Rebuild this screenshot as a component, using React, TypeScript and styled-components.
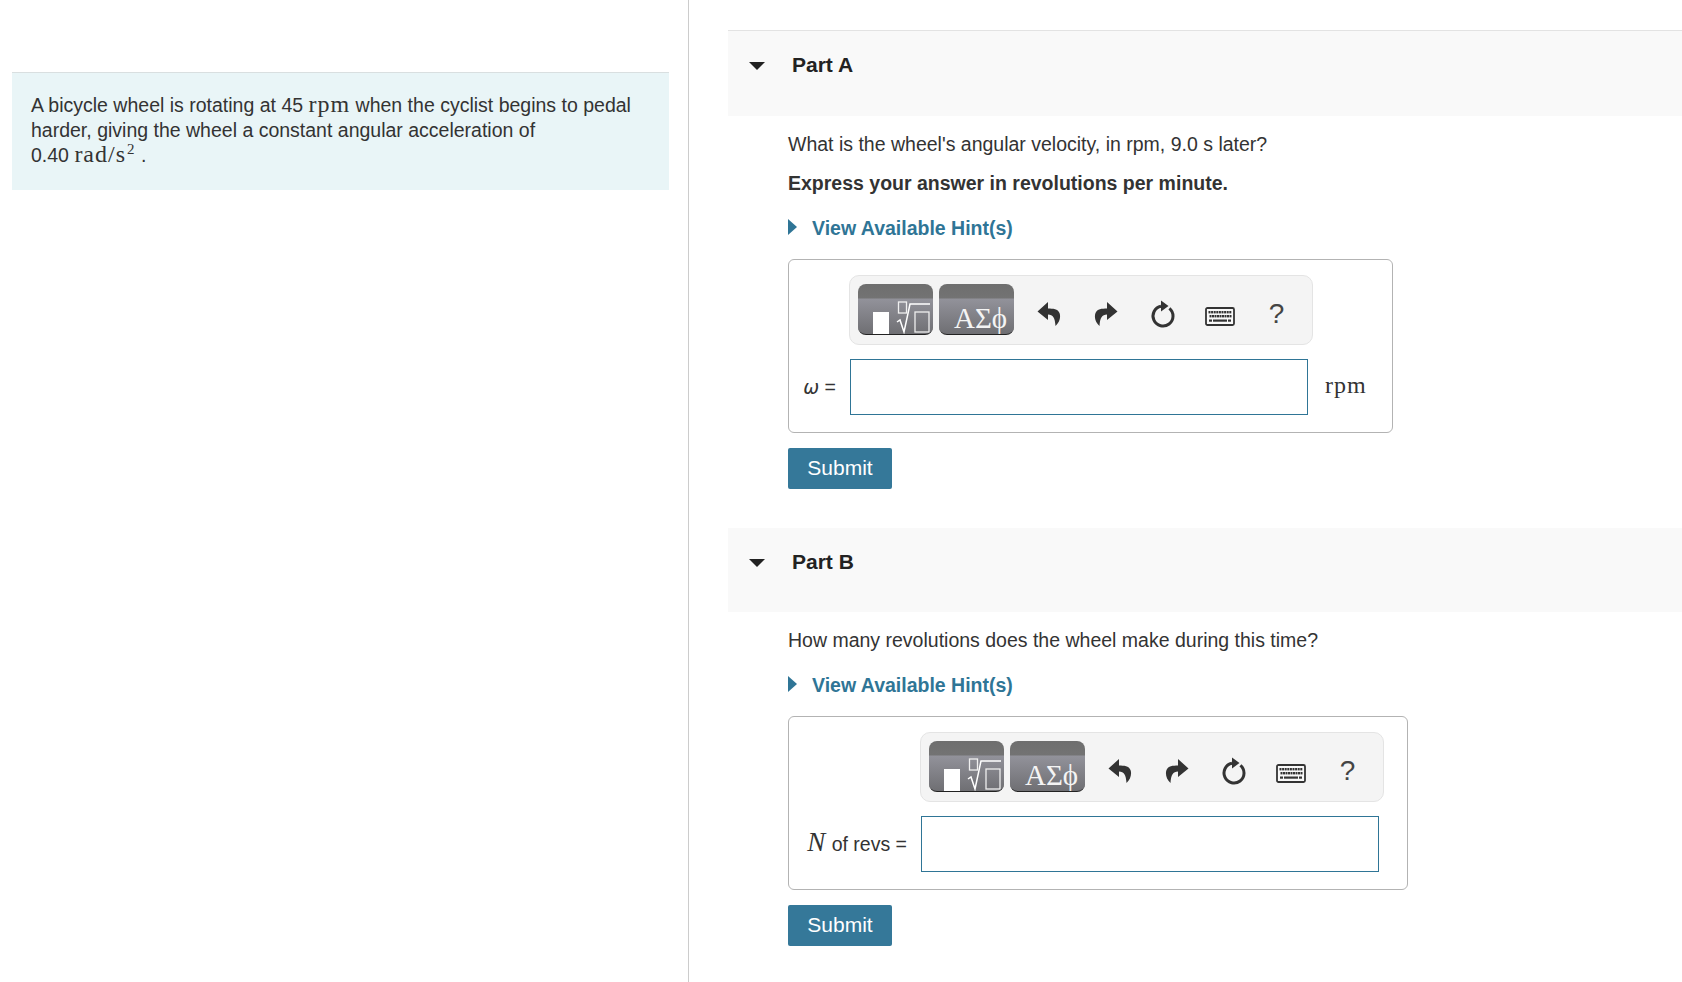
import styled, { createGlobalStyle } from 'styled-components'

const GlobalStyle = createGlobalStyle`
  html, body {
    margin: 0;
    padding: 0;
    background: #fff;
  }
  body {
    font-family: "Liberation Sans", Arial, sans-serif;
    color: #333;
    font-size: 19.5px;
    line-height: 25px;
  }
`

function UndoIcon() {
  return (
    <svg width="24" height="28" viewBox="0 0 24 28">
      <path d="M11 2 L0.500 11.500 L11 20 L11 14.500 C16 14.500 18 18 18.500 26 C22.500 22.500 24 17 22.500 13 C21 9 16 8.500 11 8.500 Z" fill="#333" />
    </svg>
  )
}

function RedoIcon() {
  return (
    <svg width="28" height="28" viewBox="0 0 28 28">
      <path d="M15 2 L25.500 11.500 L15 20 L15 14.500 C10 14.500 8 18 7.500 26 C3.500 22.500 2 17 3.500 13 C5 9 10 8.500 15 8.500 Z" fill="#333" />
    </svg>
  )
}

function ResetIcon() {
  return (
    <svg width="28" height="32" viewBox="0 0 28 32">
      <path d="M20.400 10.300 A10 10 0 1 1 12 8.200" fill="none" stroke="#333" strokeWidth="3" />
      <path d="M12 2.500 L19.500 8 L12 13.500 Z" fill="#333" />
    </svg>
  )
}

function KeyboardIcon() {
  const keys = [0, 1, 2, 3, 4, 5, 6, 7, 8]
  return (
    <svg width="30" height="26" viewBox="0 -6 30 26">
      <rect x="1" y="1" width="28" height="17" rx="1.500" fill="#f8f8f8" stroke="#333" strokeWidth="1.800" />
      {keys.map((k) => (
        <rect key={`a${k}`} x={3.500 + k * 2.600} y="4" width="2" height="2.400" fill="#333" />
      ))}
      {keys.map((k) => (
        <rect key={`b${k}`} x={4.500 + k * 2.500} y="8" width="2" height="2.400" fill="#333" />
      ))}
      <rect x="4" y="12.500" width="3" height="2.200" fill="#333" />
      <rect x="8" y="12.500" width="14" height="2.200" fill="#333" />
      <rect x="23" y="12.500" width="3" height="2.200" fill="#333" />
    </svg>
  )
}

function RootGlyph() {
  return (
    <svg width="75" height="35" viewBox="0 0 75 35">
      <rect x="15" y="13" width="16" height="22" fill="#fff" />
      <rect x="40.500" y="3" width="8" height="11" fill="none" stroke="#f0f0f0" strokeWidth="1.300" />
      <path d="M39 23 L42 21 L46 33 L52 5 L72 5" fill="none" stroke="#fff" strokeWidth="1.500" />
      <rect x="57" y="13" width="14" height="20" fill="none" stroke="#eee" strokeWidth="1.300" />
    </svg>
  )
}

type AnswerProps = {
  labelWidth: number
  label: React.ReactNode
  unit?: string
}

function AnswerBox({ labelWidth, label, unit }: AnswerProps) {
  return (
    <Answer $labelWidth={labelWidth}>
      <Toolbar>
        <MathButton>
          <RootGlyph />
        </MathButton>
        <MathButton>
          <Greek>ΑΣϕ</Greek>
        </MathButton>
        <ToolSlot><UndoIcon /></ToolSlot>
        <ToolSlot><RedoIcon /></ToolSlot>
        <ToolSlot><ResetIcon /></ToolSlot>
        <ToolSlot><KeyboardIcon /></ToolSlot>
        <ToolSlot><HelpMark>?</HelpMark></ToolSlot>
      </Toolbar>
      <AnswerLabel>{label}</AnswerLabel>
      <AnswerInput />
      {unit && <Unit>{unit}</Unit>}
    </Answer>
  )
}

function HintLink() {
  return (
    <Hint>
      <HintCaret />
      View Available Hint(s)
    </Hint>
  )
}

export default function App() {
  return (
    <Page>
      <GlobalStyle />
      <LeftColumn>
        <Intro>
          A bicycle wheel is rotating at 45 <MathText>rpm</MathText> when the cyclist begins to pedal
          <br />
          harder, giving the wheel a constant angular acceleration of
          <br />
          0.40 <MathText>rad/s<sup>2</sup></MathText> .
        </Intro>
      </LeftColumn>
      <RightColumn>
        <PartHeader $first>
          <PartCaret />
          <PartTitle>Part A</PartTitle>
        </PartHeader>
        <PartBody>
          <Question>What is the wheel's angular velocity, in rpm, 9.0 s later?</Question>
          <Instruction>Express your answer in revolutions per minute.</Instruction>
          <HintLink />
          <AnswerBox labelWidth={60} label={<><Omega>ω</Omega> =</>} unit="rpm" />
          <SubmitButton>Submit</SubmitButton>
        </PartBody>
        <PartHeader>
          <PartCaret />
          <PartTitle>Part B</PartTitle>
        </PartHeader>
        <PartBody>
          <Question>How many revolutions does the wheel make during this time?</Question>
          <HintLink />
          <AnswerBox labelWidth={131} label={<><VarN>N</VarN> of revs =</>} />
          <SubmitButton>Submit</SubmitButton>
        </PartBody>
      </RightColumn>
    </Page>
  )
}

const Page = styled.div`
  display: flex;
  height: 982px;
  overflow: hidden;
`

const LeftColumn = styled.div`
  flex-shrink: 0;
  width: 657px;
  padding: 72px 19px 0 12px;
  border-right: 1px solid #ccc;
`

const Intro = styled.div`
  box-sizing: border-box;
  height: 118px;
  padding: 20px 19px 0;
  background: #e9f5f7;
  border-top: 1px solid #d9dfe0;
  font-size: 19.5px;
  color: #333;
  white-space: nowrap;
`

const MathText = styled.span`
  font-family: "Liberation Serif", "Times New Roman", serif;
  font-size: 24px;
  line-height: 0;
  letter-spacing: 1px;

  sup {
    margin-left: 1px;
    font-size: 15px;
    line-height: 0;
    vertical-align: 8px;
  }
`

const RightColumn = styled.div`
  flex: 1;
  min-width: 0;
  padding: 30px 0 0 39px;
`

const PartHeader = styled.div<{ $first?: boolean }>`
  display: flex;
  align-items: flex-start;
  box-sizing: border-box;
  height: ${({ $first }) => ($first ? '86px' : '84px')};
  padding: 21px 0 0 21px;
  background: #f9f9f9;
  border-top: ${({ $first }) => ($first ? '1px solid #e3e3e3' : 'none')};
`

const PartCaret = styled.span`
  width: 0;
  height: 0;
  margin-top: 10px;
  border-left: 8px solid transparent;
  border-right: 8px solid transparent;
  border-top: 8px solid #222;
`

const PartTitle = styled.h2`
  margin: 0 0 0 27px;
  font-size: 21px;
  line-height: 25px;
  font-weight: 700;
  color: #222;
`

const PartBody = styled.div`
  padding: 16px 0 39px 60px;
`

const Question = styled.p`
  margin: 0 0 14px;
  font-size: 19.5px;
  line-height: 25px;
`

const Instruction = styled.p`
  margin: 0;
  font-size: 19.5px;
  line-height: 25px;
  font-weight: 700;
`

const Hint = styled.a`
  display: flex;
  align-items: center;
  height: 25px;
  margin: 20px 0 18px;
  font-size: 19.5px;
  font-weight: 700;
  color: #2f7596;
`

const HintCaret = styled.span`
  width: 0;
  height: 0;
  margin: -3px 15px 0 0;
  border-top: 8px solid transparent;
  border-bottom: 8px solid transparent;
  border-left: 9px solid #2f7596;
`

const Answer = styled.div<{ $labelWidth: number }>`
  display: grid;
  grid-template-columns: ${({ $labelWidth }) => $labelWidth}px 464px auto;
  row-gap: 14px;
  width: fit-content;
  min-width: 0;
  padding: 15px 23px 17px 0;
  border: 1px solid #b3b3b3;
  border-radius: 6px;
  margin-bottom: 15px;
`

const Toolbar = styled.div`
  grid-column: 2 / 3;
  display: flex;
  align-items: center;
  box-sizing: border-box;
  height: 70px;
  padding-left: 8px;
  background: #f4f4f4;
  border: 1px solid #e4e4e4;
  border-radius: 10px;
`

const MathButton = styled.button`
  display: flex;
  align-items: flex-end;
  justify-content: center;
  box-sizing: border-box;
  width: 75px;
  height: 51px;
  padding: 0;
  margin: -2px 6px 0 0;
  overflow: hidden;
  background: linear-gradient(#6e6e6e 0, #737373 14px, #92929a 15px, #6f6f73 100%);
  border: none;
  border-bottom: 1px solid #222;
  border-radius: 8px;
`

const Greek = styled.span`
  margin: 0 0 1px 8px;
  font-family: "Liberation Serif", "Times New Roman", serif;
  font-size: 29px;
  line-height: 30px;
  color: #f4f4f4;
`

const ToolSlot = styled.span`
  display: flex;
  align-items: center;
  justify-content: center;
  width: 57px;
  flex-shrink: 0;
  padding-top: 8px;
`

const HelpMark = styled.span`
  font-size: 28px;
  line-height: 30px;
  color: #444;
`

const AnswerLabel = styled.div`
  grid-column: 1 / 2;
  grid-row: 2;
  align-self: center;
  justify-self: end;
  padding-right: 13px;
  font-size: 19.5px;
  white-space: nowrap;
`

const Omega = styled.span`
  font-family: "DejaVu Sans", sans-serif;
  font-style: italic;
  font-size: 19px;
`

const VarN = styled.span`
  font-family: "Liberation Serif", "Times New Roman", serif;
  font-style: italic;
  font-size: 27px;
  line-height: 0;
  letter-spacing: 1px;
`

const AnswerInput = styled.input`
  grid-column: 2 / 3;
  grid-row: 2;
  box-sizing: border-box;
  width: 458px;
  height: 56px;
  margin-left: 1px;
  background: #fff;
  border: 1px solid #2f7596;
  border-radius: 0;
  outline: none;
`

const Unit = styled.div`
  grid-column: 3 / 4;
  grid-row: 2;
  align-self: center;
  margin: 0 2px 3px 12px;
  font-family: "Liberation Serif", "Times New Roman", serif;
  font-size: 24px;
  letter-spacing: 1px;
`

const SubmitButton = styled.button`
  display: block;
  width: 104px;
  height: 41px;
  padding: 0 0 2px;
  background: #357899;
  border: none;
  border-radius: 2px;
  font-family: "Liberation Sans", Arial, sans-serif;
  font-size: 21px;
  color: #fff;
`
